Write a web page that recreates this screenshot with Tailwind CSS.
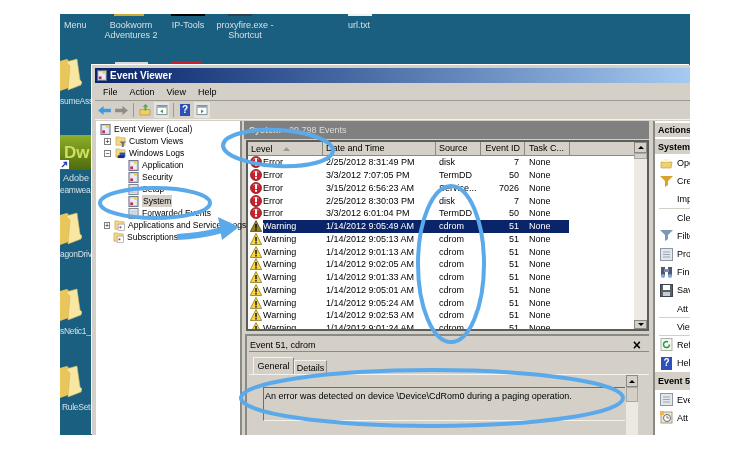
<!DOCTYPE html>
<html lang="en">
<head>
  <meta charset="UTF-8">
  <title>Event Viewer</title>
  <script src="https://cdn.jsdelivr.net/npm/@tailwindcss/browser@4"></script>
</head>
<body class="bg-white">

<!-- shared icons -->
<svg class="hidden">
  <symbol id="folder" viewBox="0 0 22 34">
    <path d="M0 3 L7 1 L11 5 L11 29 L0 33 Z" fill="#e8c65c"/>
    <path d="M6 4 L17 1 L20 22 L22 24 L21 27 L8 32 L10 8 Z" fill="#f8e7a2" stroke="#d8b658" stroke-width=".6"/>
  </symbol>
  <symbol id="tfolder-funnel" viewBox="0 0 12 12">
    <path d="M1 1h4l1 1h5v8H1z" fill="#f3d77f" stroke="#c9a84e" stroke-width=".7"/>
    <path d="M5 6h7L9.500 8.500V12h-2V8.500z" fill="#5f6f86"/>
  </symbol>
  <symbol id="tfolder-blue" viewBox="0 0 12 12">
    <path d="M1 1h4l1 1h5v8H1z" fill="#f3d77f" stroke="#c9a84e" stroke-width=".7"/>
    <rect x="5" y="5" width="6" height="5" fill="#2c4fb8"/>
    <rect x="3" y="8" width="7" height="3" fill="#1c2f70"/>
  </symbol>
  <symbol id="tfolder-doc" viewBox="0 0 12 12">
    <path d="M1 1h4l1 1h5v8H1z" fill="#f3d77f" stroke="#c9a84e" stroke-width=".7"/>
    <rect x="4.500" y="4.500" width="7" height="7" fill="#fff" stroke="#8f99a8" stroke-width=".7"/>
    <rect x="6" y="7" width="2" height="2" fill="#c22a52"/>
  </symbol>
  <symbol id="log" viewBox="0 0 11 12">
    <rect x=".5" y=".5" width="10" height="11" fill="#c5ccd8" stroke="#66708a"/>
    <rect x="2" y="2" width="7" height="8" fill="#e9ecf2"/>
    <rect x="6" y="1" width="3" height="3" fill="#f2cf3a"/>
    <rect x="2" y="7" width="3" height="3" fill="#c22a52"/>
  </symbol>
  <symbol id="plainlog" viewBox="0 0 11 12">
    <rect x=".5" y=".5" width="10" height="11" fill="#dfe3ea" stroke="#77808f"/>
    <path d="M2 4h7M2 6.500h7M2 9h7" stroke="#b4bcc8" stroke-width=".8"/>
  </symbol>
  <symbol id="error" viewBox="0 0 12 12">
    <circle cx="6" cy="6" r="5.500" fill="#c9202c" stroke="#7e1a20" stroke-width=".8"/>
    <path d="M3 3.500A4 4 0 0 1 9 3.500" stroke="#ee8a90" stroke-width="1" fill="none"/>
    <rect x="5" y="2.200" width="2" height="5" fill="#fff"/>
    <rect x="5" y="8" width="2" height="1.800" fill="#fff"/>
  </symbol>
  <symbol id="warning" viewBox="0 0 12 12">
    <path d="M6 .5 L11.700 11.500 H.3 Z" fill="#f8d73c" stroke="#7d6a1c" stroke-width=".7"/>
    <rect x="5.200" y="4" width="1.600" height="4.300" fill="#222"/>
    <rect x="5.200" y="9" width="1.600" height="1.500" fill="#222"/>
  </symbol>
  <symbol id="funnel" viewBox="0 0 13 13">
    <path d="M0 1h13L8 6v4l-3 2V6z" fill="currentColor"/>
  </symbol>
  <symbol id="props" viewBox="0 0 13 13">
    <rect x=".5" y=".5" width="12" height="12" fill="#e3e7ec" stroke="#8c98a6"/>
    <path d="M3 4h7M3 6.500h7M3 9h7" stroke="#9aa6b4"/>
  </symbol>
</svg>

<div class="relative ml-[60px] mt-[14px] h-[421px] w-[630px] overflow-hidden bg-[#1a5f80] font-['Liberation_Sans',sans-serif] text-[9px] leading-[12px] text-black blur-[0.3px]">

  <!-- desktop icons, top row -->
  <div class="absolute left-0 top-0 h-[2px] w-full">
    <div class="absolute left-[54px] top-0 h-[2px] w-[30px] bg-[#cfa83a]"></div>
    <div class="absolute left-[111px] top-0 h-[2px] w-[34px] bg-black"></div>
    <div class="absolute left-[168px] top-0 h-[2px] w-[24px] bg-[#25404f]"></div>
    <div class="absolute left-[288px] top-0 h-[2px] w-[24px] bg-[#eef0f2]"></div>
  </div>
  <div class="absolute left-[4px] top-[5px] text-[#d4e0e6]">Menu</div>
  <div class="absolute left-[41px] top-[6px] w-[60px] text-center leading-[10px] text-[#d4e0e6]">Bookworm Adventures 2</div>
  <div class="absolute left-[98px] top-[5px] w-[60px] text-center text-[#d4e0e6]">IP-Tools</div>
  <div class="absolute left-[150px] top-[6px] w-[70px] text-center leading-[10px] text-[#d4e0e6]">proxyfire.exe - Shortcut</div>
  <div class="absolute left-[269px] top-[5px] w-[60px] text-center text-[#d4e0e6]">url.txt</div>

  <!-- desktop icons peeking out behind the window -->
  <div class="absolute left-[55px] top-[48px] h-[4px] w-[33px] bg-[#d9d9d9]"></div>
  <div class="absolute left-[111px] top-[47px] h-[5px] w-[30px] bg-[#c8202c]"></div>

  <!-- desktop icons, left column -->
  <svg class="absolute left-0 top-[44px] h-[34px] w-[22px]"><use href="#folder"/></svg>
  <div class="absolute left-0 top-[81px] whitespace-nowrap text-[8.5px] tracking-[-0.3px] text-[#d4e0e6]">sumeAssi</div>
  <div class="absolute left-0 top-[121px] flex h-[35px] w-[32px] items-center bg-gradient-to-b from-[#8fb02a] to-[#4f6a0e] pl-[4px] text-[17px] font-bold leading-[20px] text-[#cfe05c]">Dw</div>
  <svg class="absolute left-0 top-[146px] h-[9px] w-[9px]" viewBox="0 0 9 9"><rect width="9" height="9" fill="#fff"/><path d="M2 7L6 3M3.500 2.500H6.500V5.500" stroke="#2040b0" stroke-width="1.300" fill="none"/></svg>
  <div class="absolute left-0 top-[158px] w-[32px] text-center text-[#d4e0e6]">Adobe</div>
  <div class="absolute left-0 top-[170px] whitespace-nowrap text-[8.5px] tracking-[-0.3px] text-[#d4e0e6]">eamwea...</div>
  <svg class="absolute left-0 top-[198px] h-[34px] w-[22px]"><use href="#folder"/></svg>
  <div class="absolute left-0 top-[234px] whitespace-nowrap text-[8.5px] tracking-[-0.3px] text-[#d4e0e6]">agonDriv</div>
  <svg class="absolute left-0 top-[274px] h-[34px] w-[22px]"><use href="#folder"/></svg>
  <div class="absolute left-0 top-[311px] whitespace-nowrap text-[8.5px] tracking-[-0.3px] text-[#d4e0e6]">sNetic1_</div>
  <svg class="absolute left-0 top-[351px] h-[34px] w-[22px]"><use href="#folder"/></svg>
  <div class="absolute left-[2px] top-[387px] whitespace-nowrap text-[8.5px] tracking-[-0.3px] text-[#d4e0e6]">RuleSets</div>

  <!-- window -->
  <div class="absolute left-[32px] top-[51px] flex h-[370px] w-[598px] flex-col border-l-2 border-t-2 border-[#d4d0c8] bg-[#d4d0c8] pl-[1px] pt-[1px] shadow-[-1px_-1px_0_#fff]">

    <div class="flex h-[15px] shrink-0 items-center gap-[3px] bg-gradient-to-r from-[#0a246a] to-[#a6caf0] pl-[2px] font-bold text-white">
      <svg class="h-[11px] w-[10px]"><use href="#log"/></svg>
      <span class="text-[10px]">Event Viewer</span>
    </div>

    <div class="flex h-[18px] shrink-0 items-center gap-[12px] border-b border-[#9b9990] pl-[8px]">
      <span>File</span><span>Action</span><span>View</span><span>Help</span>
    </div>

    <div class="flex h-[19px] shrink-0 items-center border-b border-[#f4f2ec] pl-[3px]">
      <svg class="h-[11px] w-[13px]" viewBox="0 0 14 12"><path d="M0 6l6-5v3h8v4H6v3z" fill="#3f9bd8"/></svg>
      <svg class="ml-[4px] h-[11px] w-[13px]" viewBox="0 0 14 12"><path d="M14 6L8 1v3H0v4h8v3z" fill="#8d8d88"/></svg>
      <div class="ml-[5px] h-[14px] w-px bg-[#9b9990]"></div>
      <svg class="ml-[5px] h-[12px] w-[12px]" viewBox="0 0 13 13"><path d="M1 6h11v6H1z" fill="#f0cf68" stroke="#b08e30" stroke-width=".7"/><path d="M6 7V3H4l3-3 3 3H8v4z" fill="#5aa53c"/></svg>
      <div class="ml-[3px] flex h-[16px] w-[15px] items-center justify-center bg-[#e6e3dc]"><svg class="h-[10px] w-[12px]" viewBox="0 0 12 11"><rect x=".5" y=".5" width="11" height="10" fill="#fff" stroke="#7c8a98"/><rect x="1" y="1" width="10" height="2" fill="#8aa0b8"/><path d="M7 5v4L4 7z" fill="#3c9a3c"/></svg></div>
      <div class="ml-[4px] h-[14px] w-px bg-[#9b9990]"></div>
      <div class="ml-[6px] flex h-[12px] w-[10px] items-center justify-center bg-[#2c4fb8] text-[10px] font-bold text-white">?</div>
      <div class="ml-[4px] flex h-[16px] w-[16px] items-center justify-center bg-[#e6e3dc]"><svg class="h-[10px] w-[12px]" viewBox="0 0 12 11"><rect x=".5" y=".5" width="11" height="10" fill="#fff" stroke="#7c8a98"/><rect x="1" y="1" width="10" height="2" fill="#8aa0b8"/><path d="M5 5v4l3-2z" fill="#3c9a3c"/></svg></div>
    </div>

    <div class="flex min-h-0 flex-1 pt-[1px]">

      <!-- tree -->
      <div id="tree" class="ml-[1px] w-[146px] shrink-0 border-r-2 border-[#8a8a84] bg-white pl-[4px] pt-[2px] text-[8.5px]"></div>

      <!-- middle -->
      <div class="ml-[2px] flex w-[405px] shrink-0 flex-col">
        <div class="flex h-[18px] shrink-0 items-center gap-[8px] bg-[#808080] pl-[5px] text-[#dcdcd8]">
          <span class="font-bold">System</span><span>29,798 Events</span>
        </div>

        <div class="relative ml-[2px] mt-[1px] h-[191px] w-[403px] shrink-0 overflow-hidden border-2 border-[#5c5c58] bg-white">
          <div class="flex h-[14px] items-center border-b border-[#8a8a84] bg-[#d4d0c8]">
            <div class="flex h-full w-[75px] items-center gap-[10px] border-r border-[#8a8a84] pl-[3px]">Level <svg class="h-[4px] w-[7px]" viewBox="0 0 7 4"><path d="M3.500 0L7 4H0z" fill="#9a9a94"/></svg></div>
            <div class="h-full w-[113px] border-r border-[#8a8a84] pl-[3px]">Date and Time</div>
            <div class="h-full w-[45px] border-r border-[#8a8a84] pl-[3px]">Source</div>
            <div class="h-full w-[44px] border-r border-[#8a8a84] pr-[4px] text-right">Event ID</div>
            <div class="h-full w-[45px] border-r border-[#8a8a84] pl-[4px]">Task C...</div>
          </div>
          <div id="rows"></div>
          <!-- scrollbar -->
          <div class="absolute right-0 top-0 flex h-full w-[13px] flex-col bg-[#ece9e2]">
            <div class="flex h-[11px] items-center justify-center border border-[#8a8a84] bg-[#d4d0c8]"><svg class="h-[3px] w-[6px]" viewBox="0 0 6 3"><path d="M3 0l3 3H0z" fill="#000"/></svg></div>
            <div class="h-[6px] border border-[#a8a8a2] bg-[#d4d0c8]"></div>
            <div class="flex-1"></div>
            <div class="flex h-[9px] items-center justify-center border border-[#8a8a84] bg-[#d4d0c8]"><svg class="h-[3px] w-[6px]" viewBox="0 0 6 3"><path d="M3 3l3-3H0z" fill="#000"/></svg></div>
          </div>
        </div>

        <!-- detail pane -->
        <div class="ml-[1px] mt-[3px] flex min-h-0 flex-1 flex-col overflow-hidden border-l-2 border-t-2 border-[#8a8a84] pl-[2px]">
          <div class="flex h-[16px] shrink-0 items-center justify-between border-b border-[#8a8a84] pl-[1px] pr-[8px] pt-[3px]">
            <span>Event 51, cdrom</span><span class="text-[14px] font-bold leading-none">×</span>
          </div>
          <div class="flex h-[22px] shrink-0 items-end pl-[4px]">
            <div class="flex h-[17px] w-[41px] items-center justify-center border border-b-0 border-[#f4f2ec] border-r-[#8a8a84]">General</div>
            <div class="flex h-[14px] w-[33px] items-center justify-center border border-b-0 border-[#f4f2ec] border-r-[#8a8a84]">Details</div>
          </div>
          <div class="relative min-h-0 flex-1 border-t border-[#f4f2ec] pl-[14px] pt-[12px]">
            <div class="h-[34px] w-[362px] border-b border-l border-t border-[#6e6e68] border-b-[#f4f2ec] pl-[1px] pt-[2px]">An error was detected on device \Device\CdRom0 during a paging operation.</div>
            <div class="absolute left-[377px] top-0 flex h-[62px] w-[12px] flex-col bg-[#ece9e2]">
              <div class="flex h-[12px] items-center justify-center border border-[#8a8a84] bg-[#d4d0c8]"><svg class="h-[3px] w-[6px]" viewBox="0 0 6 3"><path d="M3 0l3 3H0z" fill="#000"/></svg></div>
              <div class="h-[15px] border border-[#a8a8a2] bg-[#d4d0c8]"></div>
            </div>
          </div>
        </div>
      </div>

      <!-- actions -->
      <div class="ml-[4px] flex flex-1 flex-col overflow-hidden border-l-2 border-[#8a8a84] bg-white pt-[2px]">
        <div class="h-[14px] shrink-0 whitespace-nowrap bg-[#d4d0c8] pl-[3px] pt-[1px] font-bold">Actions</div>
        <div class="mt-[2px] h-[15px] shrink-0 whitespace-nowrap bg-[#d4d0c8] pl-[3px] font-bold leading-[16px]">System</div>
        <div id="actions"></div>
      </div>
    </div>
  </div>

  <!-- blue annotations drawn on top of the screenshot -->
  <svg class="absolute inset-0 h-[421px] w-[630px]" viewBox="60 14 630 421" fill="none" stroke="#5aa9ea" stroke-width="4">
    <ellipse cx="278" cy="148" rx="55" ry="18" transform="rotate(3 278 148)"/>
    <ellipse cx="155" cy="203" rx="55" ry="15"/>
    <ellipse cx="451" cy="264" rx="33" ry="78"/>
    <ellipse cx="432" cy="398" rx="191" ry="28"/>
    <path d="M177 237 Q200 236 222 230" stroke-width="6"/>
    <path d="M218 217 L239 227 L222 240 Z" fill="#5aa9ea" stroke="none"/>
  </svg>
</div>

<script>
  // tree rows: indent is padding of the row, expander is the +/- box
  const treeRows = [
    { name: 'Event Viewer (Local)', icon: 'log', indent: 'pl-0' },
    { name: 'Custom Views', icon: 'tfolder-funnel', indent: 'pl-[4px]', box: '+' },
    { name: 'Windows Logs', icon: 'tfolder-blue', indent: 'pl-[4px]', box: '−' },
    { name: 'Application', icon: 'log', indent: 'pl-[28px]' },
    { name: 'Security', icon: 'log', indent: 'pl-[28px]' },
    { name: 'Setup', icon: 'plainlog', indent: 'pl-[28px]' },
    { name: 'System', icon: 'log', indent: 'pl-[28px]', selected: true },
    { name: 'Forwarded Events', icon: 'plainlog', indent: 'pl-[28px]' },
    { name: 'Applications and Services Logs', icon: 'tfolder-doc', indent: 'pl-[4px]', box: '+' },
    { name: 'Subscriptions', icon: 'tfolder-doc', indent: 'pl-[13px]' },
  ];

  document.getElementById('tree').innerHTML = treeRows.map(r => `
    <div class="flex h-[12px] items-center whitespace-nowrap ${r.indent}">
      ${r.box ? `<span class="mr-[4px] flex h-[7px] w-[7px] items-center justify-center border border-[#808080] text-[7px] leading-none">${r.box}</span>` : ''}
      <svg class="mr-[3px] h-[11px] w-[11px] shrink-0"><use href="#${r.icon}"/></svg>
      <span class="${r.selected ? 'bg-[#d4d0c8] px-[1px]' : ''}">${r.name}</span>
    </div>`).join('');

  // event list
  const events = [
    ['error', 'Error', '2/25/2012 8:31:49 PM', 'disk', 7],
    ['error', 'Error', '3/3/2012 7:07:05 PM', 'TermDD', 50],
    ['error', 'Error', '3/15/2012 6:56:23 AM', 'Service...', 7026],
    ['error', 'Error', '2/25/2012 8:30:03 PM', 'disk', 7],
    ['error', 'Error', '3/3/2012 6:01:04 PM', 'TermDD', 50],
    ['warning', 'Warning', '1/14/2012 9:05:49 AM', 'cdrom', 51],
    ['warning', 'Warning', '1/14/2012 9:05:13 AM', 'cdrom', 51],
    ['warning', 'Warning', '1/14/2012 9:01:13 AM', 'cdrom', 51],
    ['warning', 'Warning', '1/14/2012 9:02:05 AM', 'cdrom', 51],
    ['warning', 'Warning', '1/14/2012 9:01:33 AM', 'cdrom', 51],
    ['warning', 'Warning', '1/14/2012 9:05:01 AM', 'cdrom', 51],
    ['warning', 'Warning', '1/14/2012 9:05:24 AM', 'cdrom', 51],
    ['warning', 'Warning', '1/14/2012 9:02:53 AM', 'cdrom', 51],
    ['warning', 'Warning', '1/14/2012 9:01:24 AM', 'cdrom', 51],
  ];

  document.getElementById('rows').innerHTML = events.map((e, i) => `
    <div class="flex h-[12.75px] items-center whitespace-nowrap">
      <svg class="ml-[2px] mr-[1px] h-[12px] w-[12px] shrink-0 ${i === 5 ? 'brightness-[.6]' : ''}"><use href="#${e[0]}"/></svg>
      <div class="flex h-full w-[306px] items-center ${i === 5 ? 'bg-[#0a246a] text-white' : ''}">
        <span class="w-[63px]">${e[1]}</span>
        <span class="w-[113px]">${e[2]}</span>
        <span class="w-[42px]">${e[3]}</span>
        <span class="w-[38px] text-right">${e[4]}</span>
        <span class="ml-[10px]">None</span>
      </div>
    </div>`).join('');

  // action pane rows, cut off by the picture edge; sep draws the divider below a row
  const actions = [
    { label: 'Ope', icon: '<svg class="h-[13px] w-[13px]" viewBox="0 0 13 13"><path d="M1 5h11l-1 6H1z" fill="#f0d070" stroke="#b8953a" stroke-width=".6"/><path d="M3 5V2h6v3" fill="#fff4c4"/></svg>' },
    { label: 'Cre', icon: '<svg class="h-[13px] w-[13px] text-[#d8a22c]"><use href="#funnel"/></svg>' },
    { label: 'Imp', sep: true },
    { label: 'Cle' },
    { label: 'Filte', icon: '<svg class="h-[13px] w-[13px] text-[#7d97b4]"><use href="#funnel"/></svg>' },
    { label: 'Pro', icon: '<svg class="h-[13px] w-[13px]"><use href="#props"/></svg>' },
    { label: 'Find', icon: '<svg class="h-[13px] w-[13px]" viewBox="0 0 13 13"><rect x="1" y="1" width="4" height="9" fill="#4a5a70"/><rect x="8" y="1" width="4" height="9" fill="#4a5a70"/><rect x="4" y="3" width="5" height="3" fill="#88a"/><circle cx="3" cy="10" r="2" fill="#7fa6d8"/><circle cx="10" cy="10" r="2" fill="#7fa6d8"/></svg>' },
    { label: 'Sav', icon: '<svg class="h-[13px] w-[13px]" viewBox="0 0 13 13"><rect x=".5" y=".5" width="12" height="12" fill="#58606c" stroke="#3c424c"/><rect x="3" y="1" width="7" height="5" fill="#fff"/><rect x="3" y="8" width="7" height="4" fill="#c6ccd4"/></svg>' },
    { label: 'Att', sep: true },
    { label: 'View', sep: true },
    { label: 'Ref', icon: '<svg class="h-[13px] w-[13px]" viewBox="0 0 13 13"><rect x="1" y=".5" width="11" height="12" fill="#f4f6f2" stroke="#aab4a8"/><path d="M9.500 6.500A3 3 0 1 1 8 4" stroke="#2f9a3c" stroke-width="1.500" fill="none"/></svg>' },
    { label: 'Help', icon: '<span class="flex h-[13px] w-[11px] items-center justify-center bg-[#2c4fb8] text-[10px] font-bold text-white">?</span>' },
    { label: 'Event 5', head: true },
    { label: 'Eve', icon: '<svg class="h-[13px] w-[13px]"><use href="#props"/></svg>' },
    { label: 'Att', icon: '<svg class="h-[13px] w-[13px]" viewBox="0 0 13 13"><rect x="1" y="1" width="11" height="11" fill="#ece6d8" stroke="#a89c80"/><circle cx="7" cy="7" r="3.500" fill="#fff" stroke="#666"/><path d="M7 5v2h2" stroke="#444" stroke-width=".7" fill="none"/><rect x="0" y="0" width="4" height="4" fill="#f0b840"/></svg>' },
  ];

  document.getElementById('actions').innerHTML = actions.map(a => a.head
    ? `<div class="flex h-[18.2px] items-center whitespace-nowrap bg-[#d4d0c8] pl-[3px] font-bold">${a.label}</div>`
    : `<div class="relative flex h-[18.2px] items-center whitespace-nowrap">
        <span class="flex w-[22px] shrink-0 justify-center pl-[1px]">${a.icon || ''}</span>${a.label}
        ${a.sep ? '<span class="absolute bottom-0 left-[4px] right-0 h-px bg-[#d4d0c8]"></span>' : ''}
      </div>`).join('');
</script>
</body>
</html>
